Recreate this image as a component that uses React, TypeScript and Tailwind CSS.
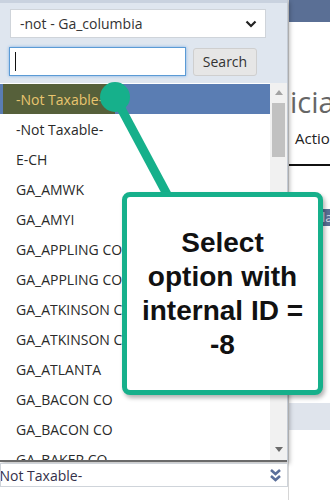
import React from "react";

const items = [
  "-Not Taxable-",
  "E-CH",
  "GA_AMWK",
  "GA_AMYI",
  "GA_APPLING CO",
  "GA_APPLING CO",
  "GA_ATKINSON CO",
  "GA_ATKINSON CO",
  "GA_ATLANTA",
  "GA_BACON CO",
  "GA_BACON CO",
  "GA_BAKER CO",
];

export default function App() {
  return (
    <div
      className="w-[330px] h-[500px] relative overflow-hidden bg-white flex"
      style={{ fontFamily: '"Open Sans", "Noto Sans", sans-serif' }}
    >
      {/* Left column: dropdown + field */}
      <div className="w-[288px] shrink-0 flex flex-col relative z-10">
        <div className="h-[462px] bg-[#dfe6ef] flex flex-col border-r border-[#c3cad4] shadow-[2px_2px_4px_rgba(0,0,0,0.25)]">
          <div className="h-[3px] bg-[#c9d2df]" />
          <div className="pt-[6px] pl-[10px]">
            <div className="w-[256px] h-[29px] bg-white border border-[#cfd4da] flex items-center justify-between pl-[9px] pr-[8px]">
              <span className="text-[14px] text-[#333]">-not - Ga_columbia</span>
              <svg width="12" height="8" viewBox="0 0 12 8">
                <polyline points="1.5,1.5 6,6 10.5,1.5" fill="none" stroke="#222" strokeWidth="2.2" />
              </svg>
            </div>
          </div>
          <div className="mt-[9px] pl-[9px] flex items-center">
            <div className="w-[177px] h-[29px] bg-white border border-[#5b9bd5] shadow-[0_0_3px_#7fb0e6] flex items-center pl-[5px]">
              <div className="w-[1px] h-[19px] bg-[#111]" />
            </div>
            <div className="ml-[7px] w-[64px] h-[28px] bg-[#e6e6e6] border border-[#cfcfcf] rounded-[3px] flex items-center justify-center text-[14px] text-[#333]">
              Search
            </div>
          </div>
          <div className="mt-[7px] flex-1 flex bg-white border-b-2 border-[#6a6a6a] overflow-hidden">
            <div className="w-[270px] pt-[1px] flex flex-col">
              <div className="h-[30px] shrink-0 bg-[#5a7db3] flex items-center pl-[3px]">
                <div className="h-full w-[112px] bg-[#56603a] flex items-center pl-[13px] text-[14px] text-[#e9c56f] whitespace-nowrap overflow-hidden">
                  -Not Taxable-
                </div>
              </div>
              {items.map((t, i) => (
                <div
                  key={i}
                  className="h-[30px] shrink-0 flex items-center pl-[16px] text-[14px] text-[#2a2a2a] whitespace-nowrap"
                >
                  {t}
                </div>
              ))}
            </div>
            <div className="w-[17px] bg-[#f1f1f1] flex flex-col items-center relative">
              <svg className="mt-[7px]" width="8" height="5" viewBox="0 0 8 5">
                <polygon points="0,5 4,0 8,5" fill="#a3a3a3" />
              </svg>
              <div className="mt-[8px] w-[13px] h-[54px] bg-[#c1c1c1]" />
              <svg className="absolute bottom-[8px]" width="8" height="5" viewBox="0 0 8 5">
                <polygon points="0,0 8,0 4,5" fill="#6b6b6b" />
              </svg>
            </div>
          </div>
        </div>
        <div className="mt-[1px] h-[24px] bg-white border border-[#cfd4da] flex items-center justify-between pr-[5px] overflow-hidden">
          <span className="ml-[-6px] text-[14px] text-[#34304a] whitespace-nowrap">-Not Taxable-</span>
          <svg width="13" height="14" viewBox="0 0 13 14">
            <polyline points="2,2 6.5,6 11,2" fill="none" stroke="#5b6f9b" strokeWidth="2.6" />
            <polyline points="2,8 6.5,12 11,8" fill="none" stroke="#5b6f9b" strokeWidth="2.6" />
          </svg>
        </div>
      </div>

      {/* Right column: page behind */}
      <div className="flex-1 flex flex-col border-l border-[#d6d6d6]">
        <div className="h-[22px] bg-[#5a6f95] shrink-0" />
        <div className="mt-[60px] pl-[1px] text-[29px] leading-[40px] text-[#666] whitespace-nowrap">icia</div>
        <div className="mt-[6px] pl-[6px] text-[15px] leading-[20px] text-[#222] whitespace-nowrap">Actio</div>
        <div className="mt-[16px] h-[2px] bg-[#111]" />
        <div className="mt-[43px] h-[17px] bg-[#5a6f95] pl-[33px] text-[13px] leading-[17px] text-[#dde3ee] whitespace-nowrap">la</div>
        <div className="mt-[177px] h-[27px] bg-[#dfe4ec]" />
      </div>

      {/* Connector */}
      <svg className="absolute left-0 top-0 z-20 pointer-events-none" width="330" height="500" viewBox="0 0 330 500">
        <line x1="115" y1="97" x2="169" y2="198" stroke="#16b08b" strokeWidth="9" />
        <circle cx="115" cy="97" r="15" fill="#16b08b" />
      </svg>

      {/* Callout */}
      <div className="absolute left-[122px] top-[192px] w-[201px] h-[203px] z-30 border-[5px] border-[#16b08b] rounded-[8px] bg-white shadow-[2px_3px_4px_rgba(0,0,0,0.3)] flex items-center justify-center text-center">
        <div
          className="text-[28px] leading-[34px] font-bold text-[#111]"
          style={{ fontFamily: '"Liberation Sans", Arial, sans-serif' }}
        >
          Select
          <br />
          option with
          <br />
          internal ID =
          <br />
          -8
        </div>
      </div>
    </div>
  );
}
